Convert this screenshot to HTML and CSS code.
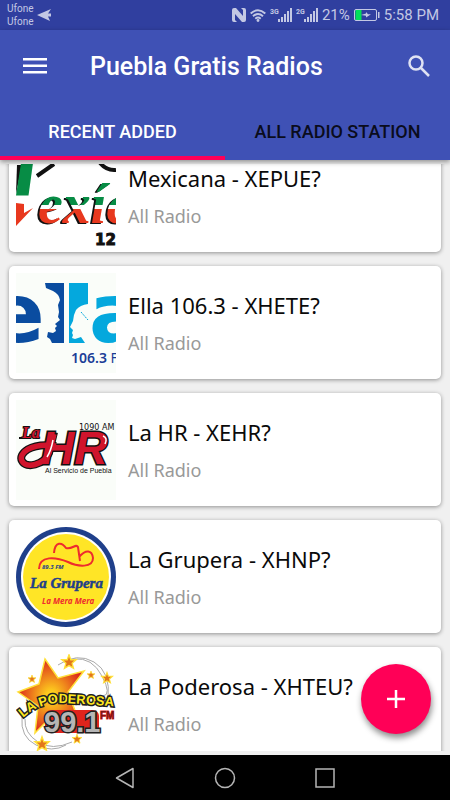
FILE: index.html
```html
<!doctype html>
<html lang="en">
<head>
    <meta charset="utf-8">
    <title>Puebla Gratis Radios</title>
    <meta name="viewport" content="width=device-width, initial-scale=1">
    <link rel="stylesheet" href="styles.css">
</head>

<body>
<div class="status-bar">
    <div class="carriers">Ufone<br>Ufone</div>
    <svg class="arrow" width="15" height="14" viewBox="0 0 15 14"><path d="M0 7 14 1 11 5.500H14V8.500H11L13 13Z"/></svg>
    <div class="status-icons">
        <!-- NFC -->
        <svg width="14" height="14" viewBox="0 0 14 14">
            <path d="M2 0H4L11 8V2L9 0H12Q14 0 14 2V12Q14 14 12 14H10L3 6V12L5 14H2Q0 14 0 12V2Q0 0 2 0Z"/>
        </svg>
        <!-- WLAN -->
        <svg width="16" height="13" viewBox="0 0 16 13">
            <path class="line" d="M.7 4.500Q8-2 15.300 4.500M3 7.200Q8 2.800 13 7.200M5.300 9.700Q8 7.400 10.700 9.700"/>
            <circle cx="8" cy="11.500" r="1.400"/>
        </svg>
        <svg width="22" height="14" viewBox="0 0 22 14">
            <text x="0" y="6" class="net">3G</text>
            <path d="M8 11h2v3H8zM11 9h2v5h-2zM14 6h2v8h-2zM17 3h2v11h-2zM20 0h2v14h-2z"/>
        </svg>
        <svg width="22" height="14" viewBox="0 0 22 14">
            <text x="0" y="6" class="net">2G</text>
            <path d="M8 11h2v3H8zM11 9h2v5h-2zM14 6h2v8h-2zM17 3h2v11h-2zM20 0h2v14h-2z"/>
        </svg>
        <span>21%</span>
        <!-- battery -->
        <svg width="26" height="12" viewBox="0 0 26 12">
            <rect x="1.500" y="1" width="6" height="10" fill="#00e05a"/>
            <rect x=".5" y=".5" width="22" height="11" rx="1.500" fill="none" stroke="currentColor"/>
            <path d="M24 3h1.500v6H24zM7 6l5-1.500V3l2 2.300h3L12 8.500V6.800z"/>
        </svg>
        <span>5:58 PM</span>
    </div>
</div>

<header class="app-header">
    <div class="toolbar">
        <button class="icon-button" type="button" aria-label="Menu">
            <svg width="24" height="18" viewBox="0 0 24 18"><path d="M0 1h24v2.500H0zM0 7.500h24V10H0zM0 14h24v2.500H0z"/></svg>
        </button>
        <h1>Puebla Gratis Radios</h1>
        <button class="icon-button search" type="button" aria-label="Search">
            <svg width="24" height="24" viewBox="0 0 24 24">
                <circle cx="9" cy="9" r="6.500"/>
                <path d="M14 14l8 8"/>
            </svg>
        </button>
    </div>
    <nav class="tabs">
        <button class="tab active" type="button">RECENT ADDED</button>
        <button class="tab" type="button">ALL RADIO STATION</button>
    </nav>
</header>

<main>
    <ul class="stations">
        <li class="station">
            <svg class="logo" viewBox="0 0 100 100">
                <defs>
                    <linearGradient id="flag" gradientUnits="userSpaceOnUse" x1="0" y1="30" x2="0" y2="80">
                        <stop offset=".58" stop-color="#078c45"/>
                        <stop offset=".58" stop-color="#fff"/>
                        <stop offset=".66" stop-color="#fff"/>
                        <stop offset=".66" stop-color="#e8381e"/>
                    </linearGradient>
                </defs>
                <path d="M1 19H6L0 48Z"/>
                <path d="M5 17H17L12.500 49.500H0Z" fill="#078c45"/>
                <path d="M0 57 8 58V67L17 62 0 80Z" fill="#e8381e"/>
                <path d="M21 30 38 18M84 17Q91 25 100 24" fill="none" stroke="#111" stroke-width="4"/>
                <text x="22" y="77" class="mexicana" fill="url(#flag)">exíc</text>
                <text x="79" y="99" class="mexicana-num">12</text>
            </svg>
            <div>
                <h2>Mexicana - XEPUE?</h2>
                <p>All Radio</p>
            </div>
        </li>
        <li class="station">
            <svg class="logo" viewBox="0 0 100 100">
                <rect width="100" height="100" fill="#fafdf9"/>
                <text x="-27" y="69" class="ella" fill="#0a4ca0">e</text>
                <path d="M29 10H48V70H36L34 66 31 64 32 59 37 60 40 58 39 55 41 53 39 51 44 47 42 44 43 39 42 32 44 27Q43 21 37 18L30 15Z" fill="#0a4ca0"/>
                <path d="M53 10H72V31Q64 32 60 37L58 42 57 48 54 54 57 57 56 60 57 62 56 65 59 66 65 64 69 70H53Z" fill="#04a8dd"/>
                <path d="M65 39 72 47" stroke="#04a8dd" stroke-width="1" stroke-dasharray="2 1"/>
                <text x="73" y="69" class="ella" fill="#04a8dd">a</text>
                <text x="55" y="90" class="ella-freq">106.3 <tspan font-weight="400">F</tspan></text>
            </svg>
            <div>
                <h2>Ella 106.3 - XHETE?</h2>
                <p>All Radio</p>
            </div>
        </li>
        <li class="station">
            <svg class="logo" viewBox="0 0 100 100">
                <rect width="100" height="100" fill="#fafdf9"/>
                <path d="M40 46C14 42 2 54 6 61 10 69 28 65 33 53L38 32" fill="none" stroke="#111" stroke-width="8"/>
                <text x="25" y="64" class="hr">HR</text>
                <path d="M40 46C14 42 2 54 6 61 10 69 28 65 33 53L38 34" fill="none" stroke="#d0142c" stroke-width="5.500"/>
                <path d="M31 57Q35 51 37 40M87 36Q92 38 89 44" fill="none" stroke="#fff" stroke-width="1.500"/>
                <path d="M3 38H12" stroke="#111" stroke-width="2"/>
                <text x="6" y="38" class="hr-la">La</text>
                <text x="63" y="30" class="hr-am">1090 AM</text>
                <text x="29" y="73" class="hr-sub">Al Servicio de Puebla</text>
            </svg>
            <div>
                <h2>La HR - XEHR?</h2>
                <p>All Radio</p>
            </div>
        </li>
        <li class="station">
            <svg class="logo" viewBox="0 0 100 100">
                <circle cx="50" cy="50" r="50" fill="#1f3f8a"/>
                <circle cx="50" cy="50" r="45" fill="#fff"/>
                <circle cx="50" cy="50" r="43" fill="#ffe526"/>
                <path d="M23 42C23 28 40 30 52 35 62 40 77 41 77 31 76 23 70 22 63 30M38 26C39 14 46 15 50 21 56 23 60 16 62 20L64 34" fill="none" stroke="#ee2b2e" stroke-width="2"/>
                <text x="26" y="42" class="grupera-fm">89.3 FM</text>
                <text x="14" y="61" class="grupera">La Grupera</text>
                <text x="26" y="77" class="grupera-sub">La Mera Mera</text>
            </svg>
            <div>
                <h2>La Grupera - XHNP?</h2>
                <p>All Radio</p>
            </div>
        </li>
        <li class="station">
            <svg class="logo" viewBox="0 0 100 100">
                <defs>
                    <radialGradient id="fire">
                        <stop offset=".1" stop-color="#ffd21e"/>
                        <stop offset=".5" stop-color="#f08a1c"/>
                        <stop offset="1" stop-color="#dc2c1c"/>
                    </radialGradient>
                    <path id="star" d="M0-8 2-2.500 8-2.500 3.500 1.500 5 7 0 4-5 7-3.500 1.500-8-2.500-2-2.500Z" fill="#e2761b" stroke="#ffe13a" stroke-width="1.500"/>
                    <path id="arc" d="M7 64Q24 48 48 49T104 53"/>
                </defs>
                <g fill="none" stroke="#aaa" stroke-width="1">
                    <path d="M42 11Q61-2 78 8T92 45M58 5Q76 3 86 22T87 42M6 63Q4 83 20 91T50 91M9 65Q8 79 22 88T56 88"/>
                </g>
                <path d="M29 5 42 24 68 17 52 38 61 62 41 57 19 79 22 52 2 38 23 30Z" fill="url(#fire)" stroke="#ffe13a" stroke-width="1.500"/>
                <use href="#star" transform="translate(53 8) scale(.9)"/>
                <use href="#star" transform="translate(16 25) scale(.5)"/>
                <use href="#star" transform="translate(75 21) scale(.5)"/>
                <use href="#star" transform="translate(91 24) scale(.7)"/>
                <use href="#star" transform="translate(26 90) scale(.9)"/>
                <use href="#star" transform="translate(61 85) scale(.6)"/>
                <text class="poderosa"><textPath href="#arc">LA PODEROSA</textPath></text>
                <rect x="29" y="56" width="54" height="23" rx="6" fill="#e0241c"/>
                <text x="28" y="78" class="poderosa-num">99.1</text>
                <text x="84" y="65" class="poderosa-fm">FM</text>
            </svg>
            <div>
                <h2>La Poderosa - XHTEU?</h2>
                <p>All Radio</p>
            </div>
        </li>
    </ul>
    <button class="fab" type="button" aria-label="Add">
        <svg width="18" height="18" viewBox="0 0 18 18"><path d="M9 0V18M0 9H18" stroke="#fff" stroke-width="2.500"/></svg>
    </button>
</main>

<nav class="nav-bar">
    <button type="button" aria-label="Back">
        <svg width="22" height="22" viewBox="0 0 22 22"><path d="M19 1.500V20.500L2.500 11Z" stroke-linejoin="round"/></svg>
    </button>
    <button type="button" aria-label="Home">
        <svg width="22" height="22" viewBox="0 0 22 22"><circle cx="11" cy="11" r="9.500"/></svg>
    </button>
    <button type="button" aria-label="Recent apps">
        <svg width="22" height="22" viewBox="0 0 22 22"><rect x="2" y="2" width="18" height="18"/></svg>
    </button>
</nav>
</body>
</html>
```
FILE: styles.css
```css
* {
    box-sizing: border-box;
}

body {
    margin: 0;
    height: 100vh;
    display: flex;
    flex-direction: column;
    overflow: hidden;
    font-family: Roboto, sans-serif;
    background-color: #f0f0f0;
}

button {
    padding: 0;
    border: none;
    background: none;
    color: inherit;
    font-family: inherit;
    cursor: pointer;
}

svg {
    display: block;
    fill: currentColor;
}

/* Status bar */
.status-bar {
    flex: none;
    display: flex;
    align-items: center;
    height: 30px;
    padding: 0 11px 0 7px;
    background-color: #303f9f;
    color: #c3c8e4;
}

.carriers {
    font-size: 10px;
    line-height: 13px;
}

.arrow {
    margin-left: 3px;
}

.status-icons {
    display: flex;
    align-items: center;
    gap: 4px;
    margin-left: auto;
    font-size: 15px;
}

.line {
    fill: none;
    stroke: currentColor;
    stroke-width: 2px;
}

.net {
    font-size: 7px;
    font-weight: bold;
}

/* Header */
.app-header {
    flex: none;
    position: relative;
    z-index: 1;
    background-color: #3f51b5;
    color: #fff;
    box-shadow: 0 2px 5px rgba(0, 0, 0, 0.4);
}

.toolbar {
    display: flex;
    align-items: center;
    height: 72px;
    padding: 0 19px 0 23px;
}

h1 {
    flex: 1;
    margin: 0 0 0 43px;
    font-size: 25px;
    font-weight: 500;
}

.search {
    color: #dfe2f3;
}

.search svg {
    fill: none;
    stroke: currentColor;
    stroke-width: 2.5px;
}

.tabs {
    display: flex;
}

.tab {
    flex: 1;
    height: 58px;
    border-top: 4px solid transparent;
    border-bottom: 4px solid transparent;
    color: #0a0c1c;
    font-size: 18px;
    font-weight: 500;
}

.tab.active {
    border-bottom-color: #ff0057;
    color: #fff;
}

/* Station list */
main {
    flex: 1;
    min-height: 0;
    position: relative;
    padding: 4px 0;
}

.stations {
    height: 100%;
    margin: 0;
    padding: 0 9px;
    overflow: hidden;
    list-style: none;
    font-family: "Noto Sans", sans-serif;
}

.station {
    display: flex;
    align-items: center;
    gap: 12px;
    height: 113px;
    margin-bottom: 14px;
    padding: 0 7px;
    border-radius: 5px;
    background-color: #fff;
    box-shadow: 0 1px 4px rgba(0, 0, 0, 0.4);
}

/* the list is scrolled a little */
.station:first-child {
    margin-top: -25px;
}

h2 {
    margin: 0 0 12px;
    color: #0a0a0a;
    font-size: 22px;
    font-weight: normal;
    line-height: 28px;
}

p {
    margin: 0;
    color: #999;
    font-size: 18px;
    line-height: 24px;
}

.fab {
    position: absolute;
    right: 19px;
    bottom: 21px;
    display: flex;
    align-items: center;
    justify-content: center;
    width: 70px;
    height: 70px;
    border-radius: 50%;
    background-color: #ff0057;
    box-shadow: 1px 4px 6px rgba(0, 0, 0, 0.45);
}

/* Logos */
.logo {
    flex: none;
    width: 100px;
    height: 100px;
    overflow: hidden;
    fill: #111;
}

.mexicana {
    font: italic bold 56px "Liberation Serif", serif;
    filter: drop-shadow(-2px 1px 0 #111);
}

.mexicana-num {
    font: bold 15px "DejaVu Sans", sans-serif;
    stroke: #111;
    stroke-width: 1px;
}

.ella {
    font: bold 82px "DejaVu Sans", sans-serif;
}

.ella-freq {
    font: 600 14px "Noto Sans", sans-serif;
    fill: #1b3d97;
}

.hr {
    font: italic bold 46px "Liberation Sans", sans-serif;
    fill: #d0142c;
    stroke: #111;
    stroke-width: 3px;
    paint-order: stroke;
}

.hr-la {
    font: italic bold 16px "Liberation Serif", serif;
    fill: #d0142c;
    stroke: #111;
    stroke-width: 2px;
    paint-order: stroke;
}

.hr-am {
    font: 8px "DejaVu Sans", sans-serif;
}

.hr-sub {
    font: 7px "Liberation Sans", sans-serif;
}

.grupera {
    font: italic bold 15px "Liberation Serif", serif;
    fill: #1f3f8a;
    stroke: #1f3f8a;
    stroke-width: 0.5px;
}

.grupera-fm {
    font: italic bold 6px "Open Sans", sans-serif;
    fill: #1f3f8a;
}

.grupera-sub {
    font: italic bold 8px "Open Sans", sans-serif;
    fill: #ee2b2e;
}

.poderosa {
    font: bold 13px "Liberation Sans", sans-serif;
    fill: #ffe81e;
    stroke: #222;
    stroke-width: 3px;
    paint-order: stroke;
}

.poderosa-num {
    font: bold 29px "Liberation Sans", sans-serif;
    fill: #b5b5b5;
    stroke: #222;
    stroke-width: 3px;
    paint-order: stroke;
}

.poderosa-fm {
    font: bold 10px "Liberation Sans", sans-serif;
    fill: #7a1414;
    stroke: #e0241c;
    stroke-width: 1px;
    paint-order: stroke;
}

/* Navigation bar */
.nav-bar {
    flex: none;
    display: flex;
    justify-content: center;
    height: 45px;
    background-color: #000;
}

.nav-bar button {
    display: flex;
    align-items: center;
    justify-content: center;
    width: 100px;
}

.nav-bar svg {
    fill: none;
    stroke: #b5b5b5;
    stroke-width: 1.5px;
}
```
